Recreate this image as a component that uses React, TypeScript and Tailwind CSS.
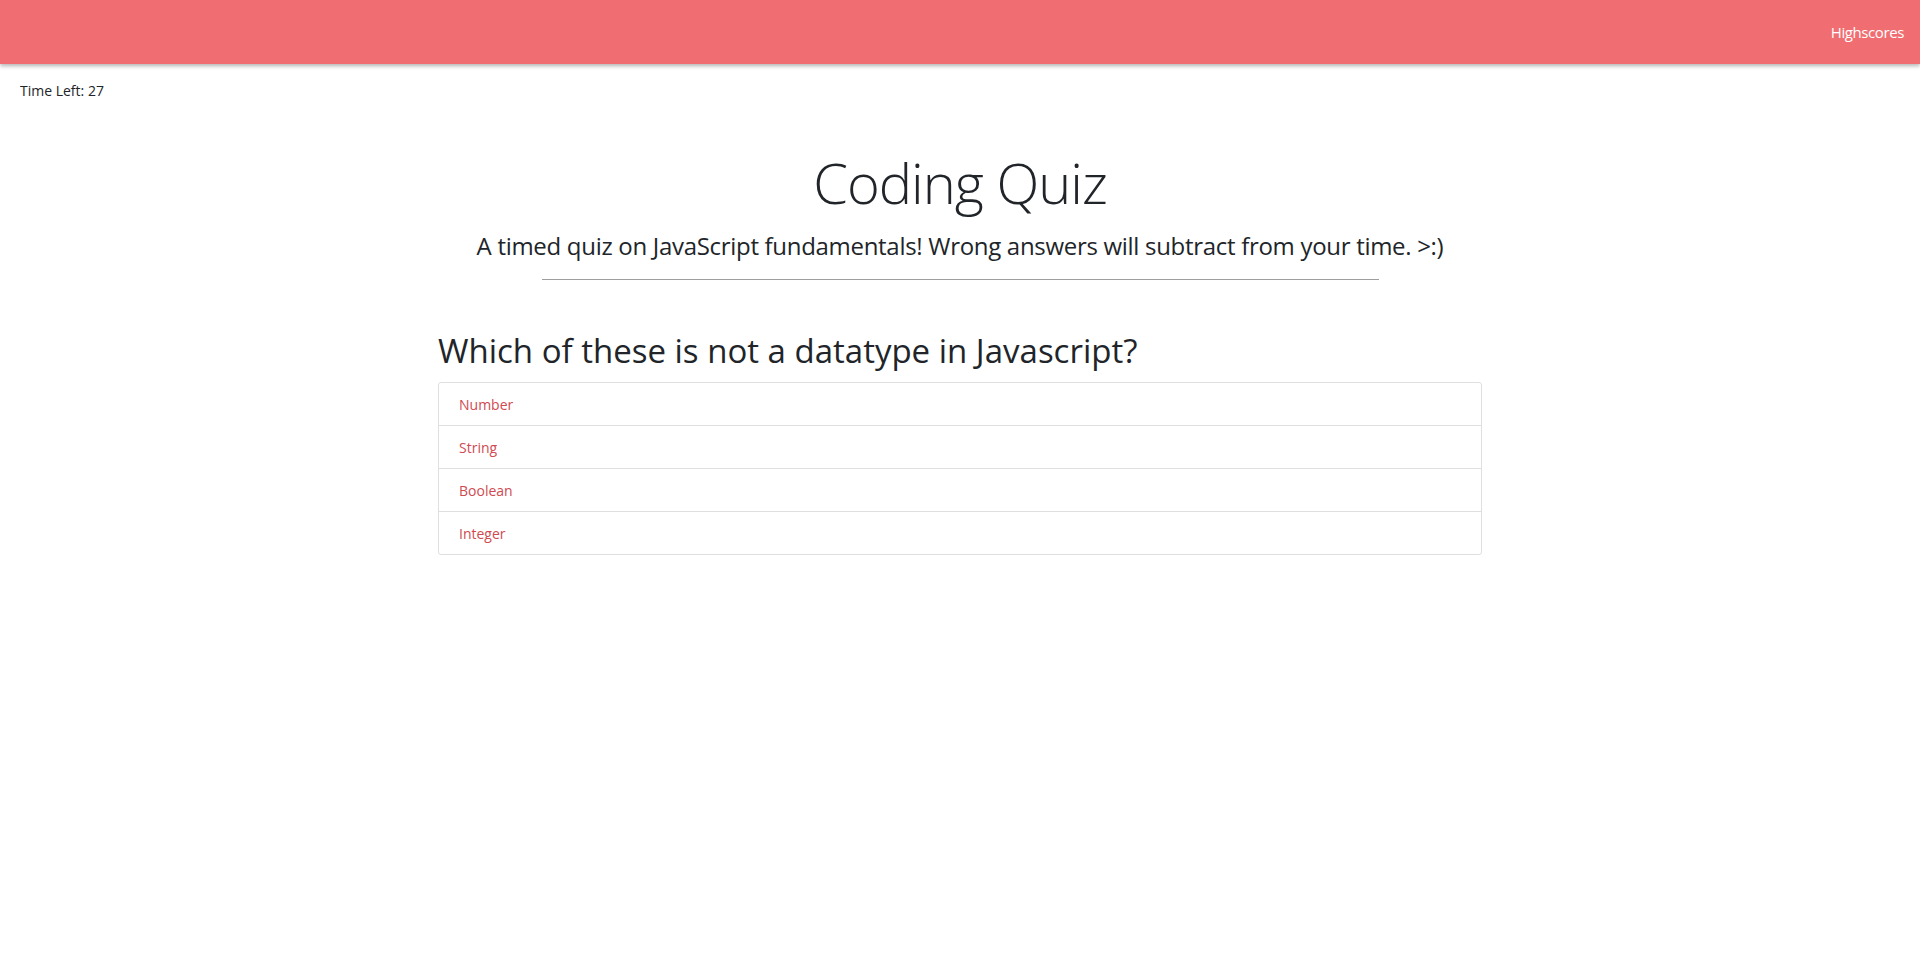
import React from "react";

const answers = ["Number", "String", "Boolean", "Integer"];

export default function App() {
  return (
    <div className="min-h-[969px] bg-white text-[#212529] font-['Open_Sans',sans-serif]">
      <nav className="h-16 bg-[#f06e72] shadow-[0_2px_4px_rgba(0,0,0,0.3)] flex items-center justify-end pr-4">
        <a className="text-white text-[15px] tracking-[-0.4px] leading-6 cursor-pointer">Highscores</a>
      </nav>
      <div className="pl-5 pt-[17px] text-[14px] leading-5">Time Left: 27</div>
      <div className="flex flex-col items-center">
        <h1 className="mt-[47px] text-[56px] leading-[68px] font-light tracking-[-1px]">Coding Quiz</h1>
        <p className="mt-[13px] text-[24px] leading-[34px] font-normal tracking-[-0.3px]">
          A timed quiz on JavaScript fundamentals! Wrong answers will subtract from your time. &gt;:)
        </p>
        <div className="mt-[16px] w-[837px] h-px bg-[#9e9e9e]" />
      </div>
      <div className="w-[1044px] mx-auto">
        <h2 className="mt-[51px] text-[33px] leading-[40px]">Which of these is not a datatype in Javascript?</h2>
        <ul className="mt-[11px] border border-[#dfdfdf] rounded-[3px]">
          {answers.map((a, i) => (
            <li
              key={a}
              className={`h-[42px] flex items-center pl-5 text-[14px] text-[#cf4a52] ${i > 0 ? "border-t border-[#dfdfdf] h-[43px]" : ""}`}
            >
              {a}
            </li>
          ))}
        </ul>
      </div>
    </div>
  );
}
